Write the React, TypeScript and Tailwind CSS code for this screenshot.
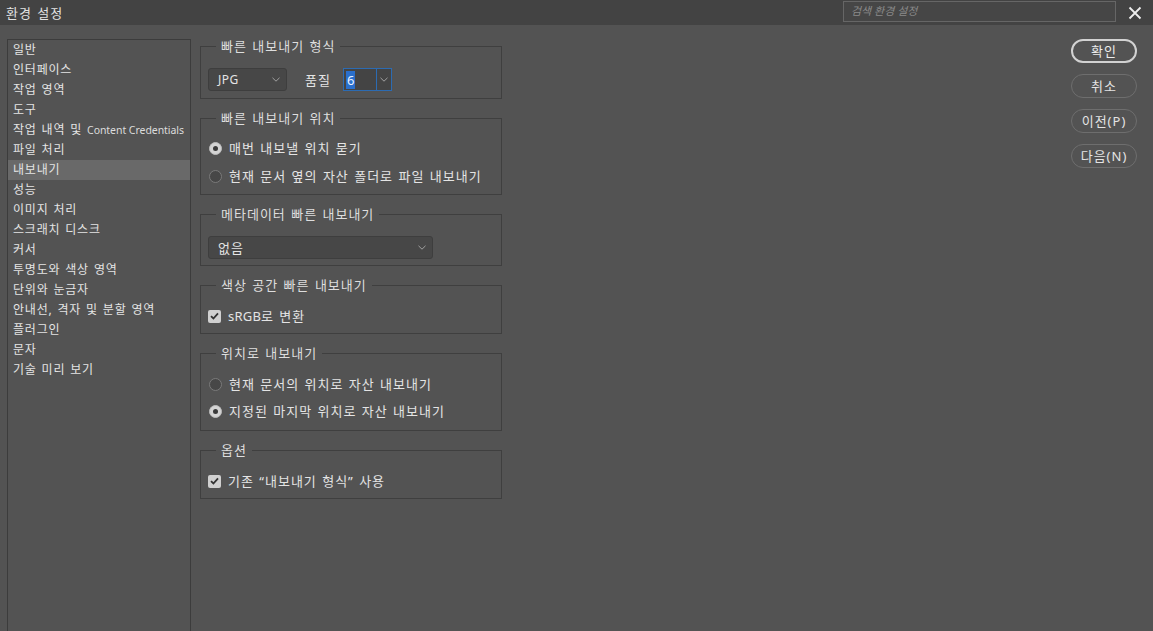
import React from "react";

const Chevron = ({ className = "" }: { className?: string }) => (
  <svg width="8" height="5" viewBox="0 0 8 5" className={className}>
    <path d="M0.5 0.8 L4 4.2 L7.5 0.8" fill="none" stroke="#a0a0a0" strokeWidth="1" />
  </svg>
);

const Radio = ({ checked }: { checked?: boolean }) =>
  checked ? (
    <span className="w-[13px] h-[13px] rounded-full bg-[#d4d4d4] border border-[#bdbdbd] flex items-center justify-center shrink-0">
      <span className="w-[5px] h-[5px] rounded-full bg-[#3a3a3a]" />
    </span>
  ) : (
    <span className="w-[13px] h-[13px] rounded-full bg-[#474747] border border-[#7a7a7a] shrink-0" />
  );

const Checkbox = () => (
  <span className="w-[13px] h-[13px] rounded-[2px] bg-[#d0d0d0] flex items-center justify-center shrink-0">
    <svg width="9" height="8" viewBox="0 0 9 8">
      <path d="M1 4.2 L3.4 6.5 L8 1.3" fill="none" stroke="#333" strokeWidth="1.8" />
    </svg>
  </span>
);

const Group = ({
  title,
  children,
  pt,
  pb,
}: {
  title: string;
  children: React.ReactNode;
  pt: string;
  pb: string;
}) => (
  <fieldset className={`border border-[#3f3f3f] px-[7px] ${pt} ${pb}`}>
    <legend className="ml-[8px] px-[5px] text-[13px] leading-4 text-[#dedede]">{title}</legend>
    {children}
  </fieldset>
);

const sideItems = [
  "일반",
  "인터페이스",
  "작업 영역",
  "도구",
  "__cc",
  "파일 처리",
  "내보내기",
  "성능",
  "이미지 처리",
  "스크래치 디스크",
  "커서",
  "투명도와 색상 영역",
  "단위와 눈금자",
  "안내선, 격자 및 분할 영역",
  "플러그인",
  "문자",
  "기술 미리 보기",
];

export default function App() {
  return (
    <div className="w-[1153px] h-[631px] overflow-hidden bg-[#535353] flex flex-col font-['Noto_Sans','Noto_Sans_CJK_KR',sans-serif] text-[#e4e4e4] tracking-[1px] [word-spacing:1px]">
      {/* Title bar */}
      <div className="h-[25px] shrink-0 bg-[#434343] flex items-center pl-[6px]">
        <span className="text-[13px] leading-4 text-[#e2e2e2]">환경 설정</span>
        <div className="ml-auto w-[273px] h-[21px] mt-[-3px] border border-[#666666] bg-[#464646] flex items-center pl-[7px]">
          <span className="text-[11px] italic text-[#8a8a8a] leading-4 tracking-normal [word-spacing:0px]">검색 환경 설정</span>
        </div>
        <div className="w-[37px] flex items-center justify-center">
          <svg width="14" height="14" viewBox="0 0 14 14">
            <path d="M1.5 1.5 L12.5 12.5 M12.5 1.5 L1.5 12.5" stroke="#eeeeee" strokeWidth="1.8" />
          </svg>
        </div>
      </div>

      <div className="flex flex-1 min-h-0 items-start">
        {/* Sidebar */}
        <div className="ml-[7px] mt-[14px] w-[184px] h-[620px] shrink-0 border border-[#3c3c3c] tracking-[0.8px]">
          {sideItems.map((it) => (
            <div
              key={it}
              className={`h-5 flex items-center pl-[5px] text-[12px] leading-4 pb-[1px] whitespace-nowrap ${
                it === "내보내기" ? "bg-[#696969]" : ""
              }`}
            >
              {it === "__cc" ? (
                <>
                  <span>작업 내역 및</span>
                  <span className="ml-[5px] text-[10.5px] text-[#dcdcdc] tracking-[-0.05px] [word-spacing:0px]">Content Credentials</span>
                </>
              ) : (
                it
              )}
            </div>
          ))}
        </div>

        {/* Main */}
        <div className="ml-[9px] mt-[13px] w-[302px] flex flex-col gap-[11px] text-[13px]">
          <Group title="빠른 내보내기 형식" pt="pt-[14px]" pb="pb-[7px]">
            <div className="flex items-center h-[23px]">
              <div className="w-[79px] h-[23px] rounded-[3px] bg-[#474747] border border-[#3e3e3e] flex items-center pl-[9px] pr-[6px]">
                <span className="text-[12px] leading-4 tracking-[0.5px]">JPG</span>
                <Chevron className="ml-auto" />
              </div>
              <span className="ml-[18px] leading-4">품질</span>
              <div className="ml-[12px] w-[49px] h-[23px] border border-[#2c6bb2] bg-[#444444] flex items-stretch">
                <div className="flex-1 flex items-center pl-[2px]">
                  <span className="bg-[#2a6fcc] text-[#e8f1ff] text-[13px] leading-[18px] px-[1px] tracking-normal">6</span>
                </div>
                <div className="w-[15px] border-l border-[#2c6bb2] flex items-center justify-center">
                  <Chevron />
                </div>
              </div>
            </div>
          </Group>

          <Group title="빠른 내보내기 위치" pt="pt-[12px]" pb="pb-[8px]">
            <div className="flex flex-col gap-[8px]">
              <div className="h-5 flex items-center gap-[7px] pl-[1px]">
                <Radio checked />
                <span className="leading-4">매번 내보낼 위치 묻기</span>
              </div>
              <div className="h-5 flex items-center gap-[7px] pl-[1px]">
                <Radio />
                <span className="leading-4">현재 문서 옆의 자산 폴더로 파일 내보내기</span>
              </div>
            </div>
          </Group>

          <Group title="메타데이터 빠른 내보내기" pt="pt-[14px]" pb="pb-[6px]">
            <div className="w-[225px] h-[23px] rounded-[3px] bg-[#474747] border border-[#3e3e3e] flex items-center pl-[9px] pr-[6px]">
              <span className="leading-4">없음</span>
              <Chevron className="ml-auto" />
            </div>
          </Group>

          <Group title="색상 공간 빠른 내보내기" pt="pt-[13px]" pb="pb-[7px]">
            <div className="h-5 flex items-center gap-[7px]">
              <Checkbox />
              <span className="leading-4">
                <span className="tracking-[0.2px]">sRGB</span>로 변환
              </span>
            </div>
          </Group>

          <Group title="위치로 내보내기" pt="pt-[13px]" pb="pb-[9px]">
            <div className="flex flex-col gap-[7px]">
              <div className="h-5 flex items-center gap-[7px] pl-[1px]">
                <Radio />
                <span className="leading-4">현재 문서의 위치로 자산 내보내기</span>
              </div>
              <div className="h-5 flex items-center gap-[7px] pl-[1px]">
                <Radio checked />
                <span className="leading-4">지정된 마지막 위치로 자산 내보내기</span>
              </div>
            </div>
          </Group>

          <Group title="옵션" pt="pt-[13px]" pb="pb-[7px]">
            <div className="h-5 flex items-center gap-[7px]">
              <Checkbox />
              <span className="leading-4">기존 “내보내기 형식” 사용</span>
            </div>
          </Group>
        </div>

        {/* Buttons */}
        <div className="ml-auto mr-[16px] mt-[14px] flex flex-col gap-[11px]">
          <button className="w-[66px] h-[24px] rounded-full border-2 border-[#d2d2d2] text-[13px] leading-4 text-[#ececec] flex items-center justify-center">
            확인
          </button>
          <button className="w-[66px] h-[24px] rounded-full border border-[#6e6e6e] text-[13px] leading-4 text-[#e4e4e4] flex items-center justify-center">
            취소
          </button>
          <button className="w-[66px] h-[24px] rounded-full border border-[#6e6e6e] text-[13px] leading-4 text-[#e4e4e4] flex items-center justify-center">
            이전(P)
          </button>
          <button className="w-[66px] h-[24px] rounded-full border border-[#6e6e6e] text-[13px] leading-4 text-[#e4e4e4] flex items-center justify-center">
            다음(N)
          </button>
        </div>
      </div>
    </div>
  );
}
